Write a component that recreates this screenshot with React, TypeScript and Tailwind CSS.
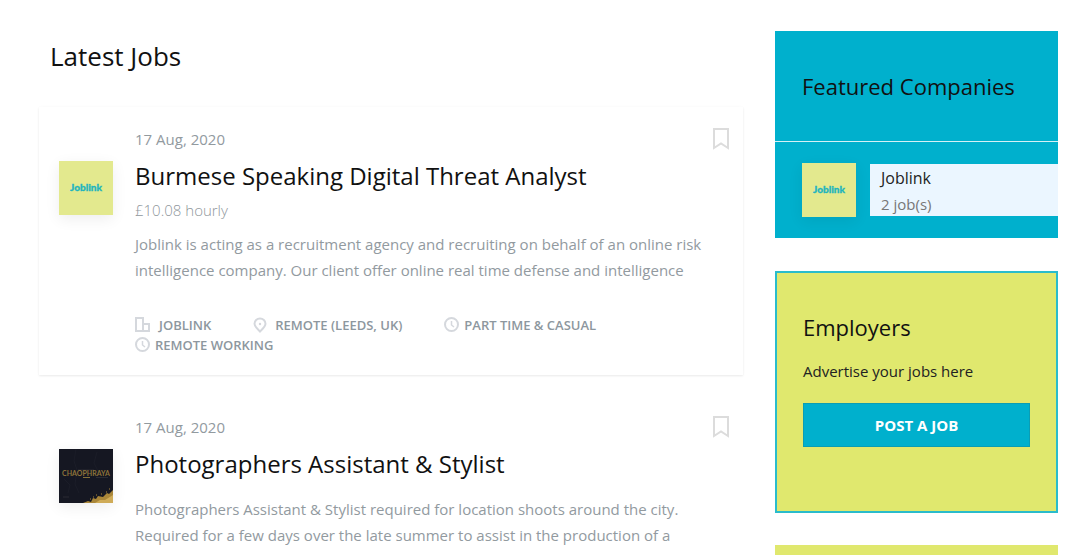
import { ReactNode } from "react";

type Tag = { icon: ReactNode; label: string; className?: string };

type Job = {
  id: number;
  date: string;
  title: string;
  rate?: string;
  detail: string;
  logo: ReactNode;
  tags: Tag[];
  active?: boolean;
};

function JoblinkLogo() {
  return (
    <svg viewBox="0 0 54 54" role="img" aria-label="Joblink" className="size-[54px] shrink-0 shadow-[0_4px_14px_rgba(0,0,0,0.07)]">
      <rect width="54" height="54" fill="#e3e98e" />
      <text
        x="27"
        y="30"
        textAnchor="middle"
        fontFamily="Lato, sans-serif"
        fontWeight="900"
        fontSize="10"
        fill="#1fb5bf"
        stroke="#1fb5bf"
        strokeWidth="0.3"
      >
        Joblink
      </text>
    </svg>
  );
}

function ChaophrayaLogo() {
  return (
    <svg viewBox="0 0 54 54" role="img" aria-label="Chaophraya" className="size-[54px] shrink-0 shadow-[0_4px_14px_rgba(0,0,0,0.07)]">
      <rect width="54" height="54" fill="#151722" />
      <path d="M17 0l-2 12 3 9-2 14 4 9M38 3l-3 11 4 8M5 30l6 6-2 8" fill="none" stroke="#1b1d28" />
      <path d="M19 21h16M37 28.5h12M4 48h6" stroke="#2a2b33" />
      <text
        x="27"
        y="27"
        textAnchor="middle"
        fontFamily="Lato, sans-serif"
        fontWeight="700"
        fontSize="7"
        fill="#8d7339"
      >
        CHAOPHRAYA
      </text>
      <path d="M24 28.5h7" stroke="#85703a" />
      <path d="M24 54l5-2 3 1 2-4 3 1 2-3 5 1 4-4 2 1 4-4v13z" fill="#a98639" />
      <path d="M36 54l5-3 5 0 8-5v8z" fill="#cfab57" />
      <path d="M31 50h1M37 46h1M42 45h1M47 43h1M50 40h1M34 48h1" stroke="#a98639" />
    </svg>
  );
}

function CompanyIcon() {
  return (
    <svg viewBox="0 0 16 16" className="size-4" fill="none" stroke="#d5d8dd" strokeWidth="2" aria-hidden="true">
      <path d="M1 1h7v13H1zM8 7h6v7H8" />
    </svg>
  );
}

function PinIcon() {
  return (
    <svg viewBox="0 0 14 16" className="h-4 w-[14px]" fill="none" stroke="#d5d8dd" strokeWidth="2" aria-hidden="true">
      <path d="M7 14.5C4.500 12 1.500 9.500 1.500 6.800a5.500 5.300 0 0 1 11 0C12.500 9.500 9.500 12 7 14.500z" />
      <circle cx="7" cy="7" r="1.200" fill="#d5d8dd" stroke="none" />
    </svg>
  );
}

function ClockIcon() {
  return (
    <svg viewBox="0 0 16 16" className="size-4" fill="none" stroke="#d5d8dd" strokeWidth="2" aria-hidden="true">
      <circle cx="7.500" cy="7.500" r="6.500" />
      <path d="M7.500 4v4l2.500 2" strokeWidth="1.500" />
    </svg>
  );
}

function BookmarkIcon() {
  return (
    <svg viewBox="0 0 18 22" className="h-[22px] w-[18px]" fill="none" stroke="#dcdcdc" strokeWidth="2" aria-hidden="true">
      <path d="M2 1h14v19l-7-4.500L2 20z" />
    </svg>
  );
}

const jobs: Job[] = [
  {
    id: 1,
    date: "17 Aug, 2020",
    title: "Burmese Speaking Digital Threat Analyst",
    rate: "£10.08 hourly",
    detail:
      "Joblink is acting as a recruitment agency and recruiting on behalf of an online risk intelligence company. Our client offer online real time defense and intelligence",
    logo: <JoblinkLogo />,
    tags: [
      { icon: <CompanyIcon />, label: "Joblink", className: "gap-2" },
      { icon: <PinIcon />, label: "Remote (Leeds, UK)", className: "gap-2" },
      { icon: <ClockIcon />, label: "Part time & Casual", className: "gap-1" },
      { icon: <ClockIcon />, label: "Remote working", className: "gap-1" },
    ],
    active: true,
  },
  {
    id: 2,
    date: "17 Aug, 2020",
    title: "Photographers Assistant & Stylist",
    detail:
      "Photographers Assistant & Stylist required for location shoots around the city. Required for a few days over the late summer to assist in the production of a",
    logo: <ChaophrayaLogo />,
    tags: [],
  },
];

function JobCard({ job }: { job: Job }) {
  return (
    <article
      className={`flex gap-[22px] p-5 ${
        job.active ? "shadow-[0_1px_2px_rgba(0,0,0,0.08),0_0_4px_rgba(0,0,0,0.02)]" : ""
      }`}
    >
      <div className="pt-[34px]">{job.logo}</div>
      <div className="min-w-0 flex-1">
        <div className="flex items-start justify-between">
          <p className="text-[15px] leading-6 text-[#929a9f]">{job.date}</p>
          <button type="button" aria-label="Save job" className="-mr-[15px] px-2 pt-px">
            <BookmarkIcon />
          </button>
        </div>
        <h2 className="mt-[9px] text-2xl leading-8 text-[#111]">
          <a href="#">{job.title}</a>
        </h2>
        {job.rate && <p className="mt-1.5 text-[15px] leading-6 font-light text-[#8f979c]">{job.rate}</p>}
        <p className={`pr-4 text-[15px] leading-[26px] text-[#929a9f] ${job.rate ? "mt-[9px]" : "mt-4"}`}>
          {job.detail}
        </p>
        {job.tags.length > 0 && (
          <ul className="mt-8 flex flex-wrap gap-x-[42px] pr-4 text-[13px] leading-5 font-semibold text-[#8d979e] uppercase">
            {job.tags.map((t) => (
              <li key={t.label} className={`flex items-center ${t.className}`}>
                {t.icon}
                {t.label}
              </li>
            ))}
          </ul>
        )}
      </div>
    </article>
  );
}

export default function App() {
  return (
    <div className="flex h-screen gap-8 overflow-hidden bg-white pt-[31px] pr-[22px] pl-[39px] font-['Open_Sans',sans-serif]">
      <main className="min-w-0 flex-1">
        <h1 className="mb-[33px] pt-[7px] pl-[11px] text-[26px] leading-9 text-[#111]">Latest Jobs</h1>
        <div className="flex flex-col gap-5">
          {jobs.map((job) => (
            <JobCard key={job.id} job={job} />
          ))}
        </div>
      </main>

      <aside className="w-[283px] shrink-0">
        {/* Featured companies */}
        <section className="bg-[#00b0cd]">
          <h2 className="border-b border-[#d5f1f6] px-[27px] py-[39px] text-[22px] leading-8 text-[#111]">
            Featured Companies
          </h2>
          <a href="#" className="flex items-center gap-[14px] py-[21px] pl-[27px]">
            <JoblinkLogo />
            <div className="flex-1 bg-[#ebf6ff] pl-[11px]">
              <h3 className="text-base leading-7 text-[#222]">Joblink</h3>
              <p className="text-[15px] leading-6 text-[#777]">2 job(s)</p>
            </div>
          </a>
        </section>

        {/* Employers */}
        <section className="mt-[33px] border-2 border-[#2abccb] bg-[#e0e86e] px-[26px] pt-[38px] pb-16">
          <h2 className="text-[22px] leading-8 text-[#111]">Employers</h2>
          <p className="mt-4 text-[15px] leading-6 text-[#222]">Advertise your jobs here</p>
          <button
            type="button"
            className="mt-5 w-full border border-[#0a9db5] bg-[#00b0cd] py-2 text-[15px] leading-[26px] font-bold text-white"
          >
            POST A JOB
          </button>
        </section>

        <section className="mt-8 h-60 bg-[#e0e86e]" />
      </aside>
    </div>
  );
}
